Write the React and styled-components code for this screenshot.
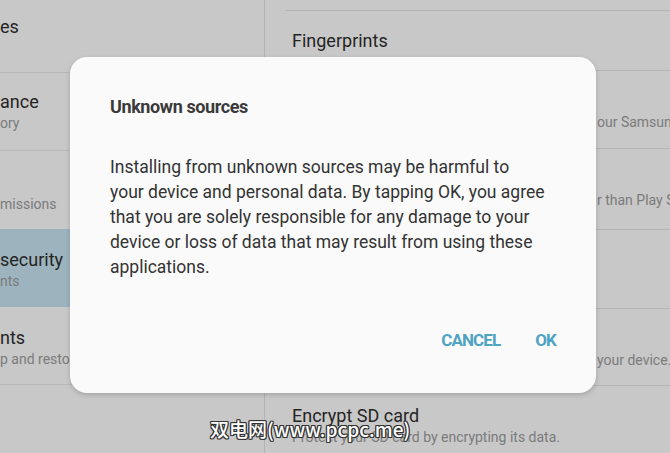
import React from "react";
import styled, { createGlobalStyle } from "styled-components";

const Global = createGlobalStyle`
  html, body { margin: 0; padding: 0; }
  body { width: 670px; height: 453px; overflow: hidden; font-family: Roboto, "Noto Sans", sans-serif; }
`;

const Screen = styled.div`
  position: relative;
  width: 670px;
  height: 453px;
  overflow: hidden;
  background: #fafafa;
  display: grid;
  grid-template-columns: 265px 1fr;
`;

const LeftPanel = styled.div`
  border-right: 1px solid #e0e0e0;
  display: flex;
  flex-direction: column;
`;

const LeftItem = styled.div`
  height: ${(p) => p.$h}px;
  box-sizing: border-box;
  display: flex;
  flex-direction: column;
  justify-content: center;
  padding-top: ${(p) => p.$pt || 0}px;
  background: ${(p) => (p.$active ? "#c5e2ee" : "transparent")};
  border-bottom: 1px solid ${(p) => (p.$divider ? "#e6e6e6" : "transparent")};
  white-space: nowrap;
  overflow: hidden;
`;

const Title = styled.div`
  font-size: 18px;
  line-height: 23px;
  color: #2e2e2e;
  min-height: 23px;
`;

const Sub = styled.div`
  font-size: 14px;
  line-height: 20px;
  min-height: 20px;
  color: #9a9a9a;
  padding-left: ${(p) => p.$indent || 0}px;
`;

const RightPanel = styled.div`
  padding: 10px 0 0 20px;
  display: flex;
  flex-direction: column;
`;

const RightItem = styled.div`
  height: ${(p) => p.$h}px;
  box-sizing: border-box;
  border-top: 1px solid #e2e2e2;
  padding-left: 7px;
  padding-top: ${(p) => p.$pt || 0}px;
  display: flex;
  flex-direction: column;
  justify-content: ${(p) => (p.$pt ? "flex-start" : "center")};
  white-space: nowrap;
  overflow: hidden;
`;

const Scrim = styled.div`
  position: absolute;
  inset: 0;
  background: rgba(0, 0, 0, 0.2);
`;

const Dialog = styled.div`
  position: absolute;
  left: 70px;
  top: 57px;
  width: 526px;
  height: 336px;
  box-sizing: border-box;
  background: #fafafa;
  border-radius: 17px;
  box-shadow: 0 2px 5px rgba(0, 0, 0, 0.18);
  padding: 38px 40px 0 40px;
  display: flex;
  flex-direction: column;
`;

const DialogTitle = styled.h2`
  margin: 0;
  font-family: Roboto, sans-serif;
  font-weight: 700;
  font-size: 18px;
  line-height: 24px;
  letter-spacing: -0.4px;
  color: #3a3a3a;
`;

const DialogBody = styled.p`
  margin: 36px 0 0 0;
  font-family: Roboto, sans-serif;
  font-size: 17.5px;
  line-height: 25px;
  color: #333333;
  white-space: nowrap;
`;

const Actions = styled.div`
  margin-top: 50px;
  display: flex;
  justify-content: flex-end;
  gap: 35px;
`;

const ActionButton = styled.button`
  border: 0;
  background: none;
  padding: 0;
  font-family: Roboto, sans-serif;
  font-weight: 700;
  font-size: 17px;
  line-height: 20px;
  letter-spacing: -0.9px;
  color: #4ea3c2;
  cursor: pointer;
`;

const Watermark = styled.div`
  position: absolute;
  left: 210px;
  top: 416px;
  font-family: "Noto Sans CJK SC", "DejaVu Sans", sans-serif;
  font-size: 19px;
  line-height: 26px;
  font-weight: 500;
  color: #ffffff;
  white-space: nowrap;
  text-shadow: -1px -1px 0 #333, 1px -1px 0 #333, -1px 1px 0 #333, 1px 1px 0 #333,
    0 1px 0 #333, 0 -1px 0 #333, 1px 0 0 #333, -1px 0 0 #333;
`;

const bodyLines = [
  "Installing from unknown sources may be harmful to",
  "your device and personal data. By tapping OK, you agree",
  "that you are solely responsible for any damage to your",
  "device or loss of data that may result from using these",
  "applications.",
];

export default function App() {
  return (
    <>
      <Global />
      <Screen>
        <LeftPanel>
          <LeftItem $h={73} $divider>
            <Title>es</Title>
            <Sub />
          </LeftItem>
          <LeftItem $h={78} $divider>
            <Title>ance</Title>
            <Sub>ory</Sub>
          </LeftItem>
          <LeftItem $h={78} $pt={5}>
            <Title></Title>
            <Sub>missions</Sub>
          </LeftItem>
          <LeftItem $h={78} $active $pt={3}>
            <Title>security</Title>
            <Sub>nts</Sub>
          </LeftItem>
          <LeftItem $h={78} $divider $pt={3}>
            <Title>nts</Title>
            <Sub>p and restore</Sub>
          </LeftItem>
          <LeftItem $h={68} />
        </LeftPanel>
        <RightPanel>
          <RightItem $h={60}>
            <Title>Fingerprints</Title>
          </RightItem>
          <RightItem $h={78} $pt={18}>
            <Title></Title>
            <Sub $indent={305}>our Samsung account.</Sub>
          </RightItem>
          <RightItem $h={81} $pt={18}>
            <Title></Title>
            <Sub $indent={305}>r than Play Store.</Sub>
          </RightItem>
          <RightItem $h={79} />
          <RightItem $h={77} $pt={18}>
            <Title></Title>
            <Sub $indent={305}>your device.</Sub>
          </RightItem>
          <RightItem $h={70} $pt={18}>
            <Title>Encrypt SD card</Title>
            <Sub>Protect your SD card by encrypting its data.</Sub>
          </RightItem>
        </RightPanel>
        <Scrim />
        <Dialog role="dialog">
          <DialogTitle>Unknown sources</DialogTitle>
          <DialogBody>
            {bodyLines.map((line, i) => (
              <React.Fragment key={i}>
                {line}
                {i < bodyLines.length - 1 && <br />}
              </React.Fragment>
            ))}
          </DialogBody>
          <Actions>
            <ActionButton>CANCEL</ActionButton>
            <ActionButton>OK</ActionButton>
          </Actions>
        </Dialog>
        <Watermark>双电网(www.pcpc.me)</Watermark>
      </Screen>
    </>
  );
}
